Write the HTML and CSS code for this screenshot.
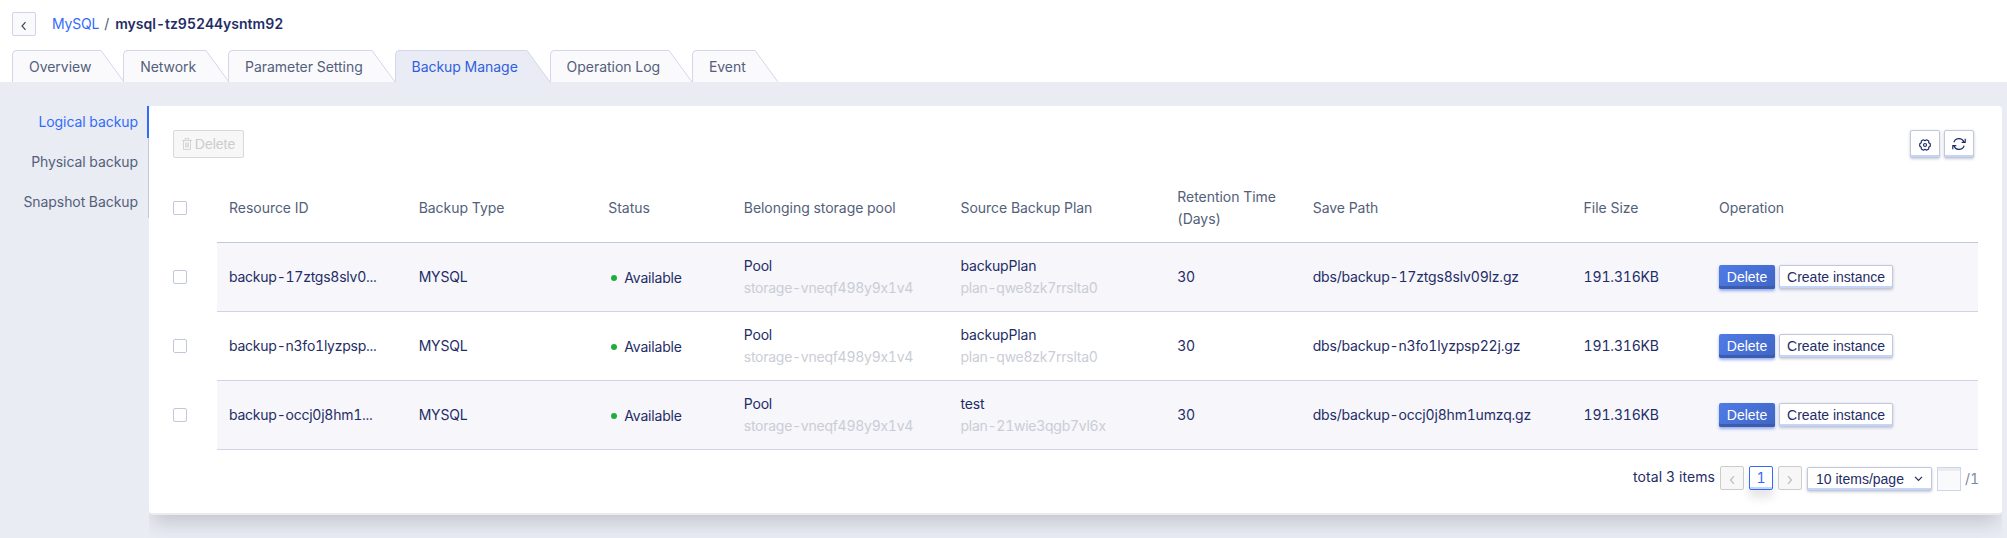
FILE: index.html
```
<!DOCTYPE html>
<html lang="en">
<head>
<meta charset="utf-8">
<title>MySQL / mysql-tz95244ysntm92</title>
<link rel="stylesheet" href="styles.css">
</head>
<body>
<header class="header">
  <div class="crumbs">
    <button class="back" aria-label="Back"><svg width="8" height="10" viewBox="0 0 8 10"><path d="M5.500 1.200 2 5l3.500 3.800"/></svg></button>
    <a class="crumb-link">MySQL</a><span class="crumb-sep">/</span><b class="crumb-name">mysql-tz95244ysntm92</b>
  </div>
  <nav class="tabs">
    <a class="tab"><span class="tab-text">Overview</span><svg class="slope" width="24" height="32" viewBox="0 0 24 32"><path class="fill" d="M0 0 23 32H0z"/><path class="edge" d="M0 .5 23 32"/></svg></a>
    <a class="tab"><span class="tab-text">Network</span><svg class="slope" width="24" height="32" viewBox="0 0 24 32"><path class="fill" d="M0 0 23 32H0z"/><path class="edge" d="M0 .5 23 32"/></svg></a>
    <a class="tab"><span class="tab-text">Parameter Setting</span><svg class="slope" width="24" height="32" viewBox="0 0 24 32"><path class="fill" d="M0 0 23 32H0z"/><path class="edge" d="M0 .5 23 32"/></svg></a>
    <a class="tab active"><span class="tab-text">Backup Manage</span><svg class="slope" width="24" height="32" viewBox="0 0 24 32"><path class="fill" d="M0 0 23 32H0z"/><path class="edge" d="M0 .5 23 32"/></svg></a>
    <a class="tab"><span class="tab-text">Operation Log</span><svg class="slope" width="24" height="32" viewBox="0 0 24 32"><path class="fill" d="M0 0 23 32H0z"/><path class="edge" d="M0 .5 23 32"/></svg></a>
    <a class="tab"><span class="tab-text">Event</span><svg class="slope" width="24" height="32" viewBox="0 0 24 32"><path class="fill" d="M0 0 23 32H0z"/><path class="edge" d="M0 .5 23 32"/></svg></a>
  </nav>
</header>
<div class="body">
  <aside class="side">
    <a class="side-item active">Logical backup</a>
    <a class="side-item">Physical backup</a>
    <a class="side-item">Snapshot Backup</a>
  </aside>
  <main class="main">
    <section class="panel">
      <div class="toolbar">
        <button class="btn disabled"><svg width="10" height="12" viewBox="0 0 10 12"><path d="M0 2.500h10M3 2.500V.5h4v2M1.500 2.500v9h7v-9M3.700 4.500v5M5 4.500v5M6.300 4.500v5"/></svg>Delete</button>
        <div class="tools">
          <button class="btn icon" aria-label="Settings"><svg width="12" height="12" viewBox="0 0 12 12"><path stroke-linejoin="round" d="M11.260 4.790v2.420L9.720 8.150l-.04 1.800-2.100 1.210L6 10.300l-1.580.86-2.100-1.210-.04-1.800L.740 7.210V4.790l1.540-.94.04-1.800L4.420.840 6 1.700 7.580.840l2.100 1.210.04 1.800z"/><circle cx="6" cy="6" r="1.500"/></svg></button>
          <button class="btn icon refresh" aria-label="Refresh"><svg width="14" height="12" viewBox="0 0 14 12"><path d="M1.900 4.200A5.300 5.300 0 0 1 11.900 4M12.100 7.800A5.300 5.300 0 0 1 2.100 8M13.200.8v3.600H9.700M.8 11.200V7.600h3.500"/></svg></button>
        </div>
      </div>
      <div class="table">
        <div class="row head">
          <div class="check"><i class="box"></i></div>
          <div class="cells">
            <div>Resource ID</div><div>Backup Type</div><div>Status</div><div>Belonging storage pool</div><div>Source Backup Plan</div><div>Retention Time (Days)</div><div>Save Path</div><div>File Size</div><div>Operation</div>
          </div>
        </div>
        <div class="row data odd">
          <div class="check"><i class="box"></i></div>
          <div class="cells">
            <div class="id">backup-17ztgs8slv0...</div><div>MYSQL</div><div class="status"><i class="dot"></i>Available</div><div>Pool<small>storage-vneqf498y9x1v4</small></div><div>backupPlan<small>plan-qwe8zk7rrslta0</small></div><div>30</div><div>dbs/backup-17ztgs8slv09lz.gz</div><div>191.316KB</div><div class="ops"><button class="btn small primary">Delete</button><button class="btn small">Create instance</button></div>
          </div>
        </div>
        <div class="row data">
          <div class="check"><i class="box"></i></div>
          <div class="cells">
            <div class="id">backup-n3fo1lyzpsp...</div><div>MYSQL</div><div class="status"><i class="dot"></i>Available</div><div>Pool<small>storage-vneqf498y9x1v4</small></div><div>backupPlan<small>plan-qwe8zk7rrslta0</small></div><div>30</div><div>dbs/backup-n3fo1lyzpsp22j.gz</div><div>191.316KB</div><div class="ops"><button class="btn small primary">Delete</button><button class="btn small">Create instance</button></div>
          </div>
        </div>
        <div class="row data odd">
          <div class="check"><i class="box"></i></div>
          <div class="cells">
            <div class="id">backup-occj0j8hm1...</div><div>MYSQL</div><div class="status"><i class="dot"></i>Available</div><div>Pool<small>storage-vneqf498y9x1v4</small></div><div>test<small>plan-21wie3qgb7vl6x</small></div><div>30</div><div>dbs/backup-occj0j8hm1umzq.gz</div><div>191.316KB</div><div class="ops"><button class="btn small primary">Delete</button><button class="btn small">Create instance</button></div>
          </div>
        </div>
      </div>
      <div class="pager">
        <span class="total">total 3 items</span>
        <button class="page off" aria-label="Previous"><svg width="6" height="10" viewBox="0 0 6 10"><path d="M5 1.200 1.500 5 5 8.800"/></svg></button>
        <button class="page current">1</button>
        <button class="page off" aria-label="Next"><svg width="6" height="10" viewBox="0 0 6 10"><path d="M1 1.200 4.500 5 1 8.800"/></svg></button>
        <button class="btn small select">10 items/page<svg width="9" height="6" viewBox="0 0 9 6"><path d="M1 .8 4.500 4.500 8 .8"/></svg></button>
        <span class="jump"></span><span class="pages">/1</span>
      </div>
    </section>
  </main>
</div>
</body>
</html>
```
FILE: styles.css
```
* { box-sizing: border-box; }
body {
  margin: 0;
  height: 538px;
  overflow: hidden;
  display: flex;
  flex-direction: column;
  background: #fff;
  color: #1f2d66;
  font: 14px/22px Inter, "Liberation Sans", sans-serif;
  font-feature-settings: "tnum" 1, "calt" 0;
  letter-spacing: -.03px;
}
svg { display: block; fill: none; stroke: currentColor; stroke-width: 1.2; flex: none; }
button { font: inherit; color: inherit; margin: 0; padding: 0; background: none; }

.header { height: 82px; flex: none; padding: 12px 0 0 12px; display: flex; flex-direction: column; justify-content: space-between; }
.crumbs { display: flex; align-items: center; height: 24px; }
.back { width: 24px; height: 24px; display: flex; align-items: center; justify-content: center; border: 1px solid #d0d4ea; border-radius: 2px; background: #fafafd; padding-top: 3px; color: #39435f; }
.crumb-link { margin-left: 16px; color: #326bfb; letter-spacing: -.2px; }
.crumb-sep { margin: 0 6px 0 5px; color: #4c5a73; }
.crumb-name { font-weight: 600; letter-spacing: 0; }

.tabs { display: flex; height: 32px; }
.tab { display: flex; margin-right: -1.5px; color: #53607a; --bg: #fafafd; }
.tab-text { height: 32px; padding: 5px 9.3px 0 16px; border: 1px solid #d3d6ec; border-width: 1px 0 0 1px; border-top-left-radius: 5px; background: var(--bg); }
.tab.active { --bg: #eaecf5; color: #3060e0; }
.slope .fill { fill: var(--bg); stroke: none; }
.slope .edge { stroke: #d3d6ec; stroke-width: 1; }

.body { flex: 1; display: flex; background: #eaecf4; padding: 24px 5px 0 0; }
.side { width: 149px; }
.side-item { display: block; height: 40px; padding: 13px 10px 0 0; border-right: 1px solid #c1c8dc; text-align: right; color: #53607a; letter-spacing: -.07px; }
.side-item.active { height: 32px; padding: 5px 9px 0 0; border-right: 2px solid #326bfb; color: #326bfb; }

.main { flex: 1; overflow: hidden; }
.panel { height: 409px; padding: 24px; border-bottom: 2px solid #ebebeb; border-radius: 4px; background: #fff; box-shadow: 0 12px 18px -4px rgba(50, 50, 60, .2); }
.toolbar { display: flex; justify-content: space-between; height: 28px; padding-right: 4px; }
.tools { display: flex; gap: 4px; }

.btn { display: flex; align-items: center; justify-content: center; height: 28px; padding: 0 7px; border: 1px solid #c1c8de; border-radius: 2px; background: #fff; box-shadow: inset 0 -2px 0 #c5d5f8, 0 1px 3px rgba(30, 40, 80, .25); font-family: "Liberation Sans", sans-serif; letter-spacing: 0; white-space: nowrap; }
.btn.disabled { width: 71px; border-color: #d9d9d9; background: #f7f7f7; box-shadow: none; color: #ccc; gap: 3px; }
.btn.disabled svg { stroke-width: .8; }
.btn.icon { width: 30px; padding: 2px 0 0; }
.btn.refresh { padding: 0 0 1px; }
.btn.small { height: 24px; width: 114px; }
.btn.small.primary { width: 56px; border-width: 0; background: linear-gradient(135deg, #4f7be6, #4066c5); box-shadow: inset 0 -3px 0 #3c5cb0, 0 2px 3px rgba(60, 100, 220, .5); color: #fff; }

.table { margin-top: 16px; }
.row { display: flex; height: 69px; }
.data { letter-spacing: -.18px; }
.check { width: 44px; padding-bottom: 1px; display: flex; align-items: center; }
.box { width: 14px; height: 14px; border: 1px solid #c1c8de; border-radius: 2px; background: #fff; }
.cells { flex: 1; display: grid; grid-template-columns: 1.4fr 1.4fr 1fr 1.6fr 1.6fr 1fr 2fr 1fr 2fr; align-items: center; border-bottom: 1px solid #cfd4e8; }
.cells > div { padding: 0 12px; min-width: 0; }
.head .cells { border-color: #c1c8de; color: #53607a; }
.odd .cells { background: #f6f6fb; }
.cells small { display: block; font-size: 14px; letter-spacing: -.26px; color: #cbcdd6; }
.cells .id { letter-spacing: -.24px; }
.cells .status { display: flex; align-items: center; padding: 2px 0 0 15px; gap: 7px; }
.dot { width: 6px; height: 6px; border-radius: 50%; background: #1fae3e; }
.cells .ops { display: flex; gap: 4px; }

.pager { display: flex; justify-content: flex-end; margin-top: 16px; }
.page { width: 24px; height: 24px; margin-right: 5px; border: 1px solid #ccc; border-radius: 2px; display: flex; align-items: center; justify-content: center; }
.total { margin-right: 5px; letter-spacing: .08px; }
.off { background: #f7f7f7; color: #bbb; padding-top: 4px; }
.current { border-color: #326bfb; color: #326bfb; box-shadow: inset 0 -2px 0 #c5d5f8, 0 8px 10px rgba(0, 0, 0, .1); }
.btn.select { width: 125px; margin-top: 1px; padding: 0 8px; justify-content: space-between; }
.jump { width: 24px; height: 24px; margin: 1px 4px 0 5px; border: 1px solid #d0d4ea; background: #fafafd; box-shadow: inset 0 3px 0 #ebecf1; }
.pages { width: 13px; margin-top: 2px; color: #7b88a3; }
```
